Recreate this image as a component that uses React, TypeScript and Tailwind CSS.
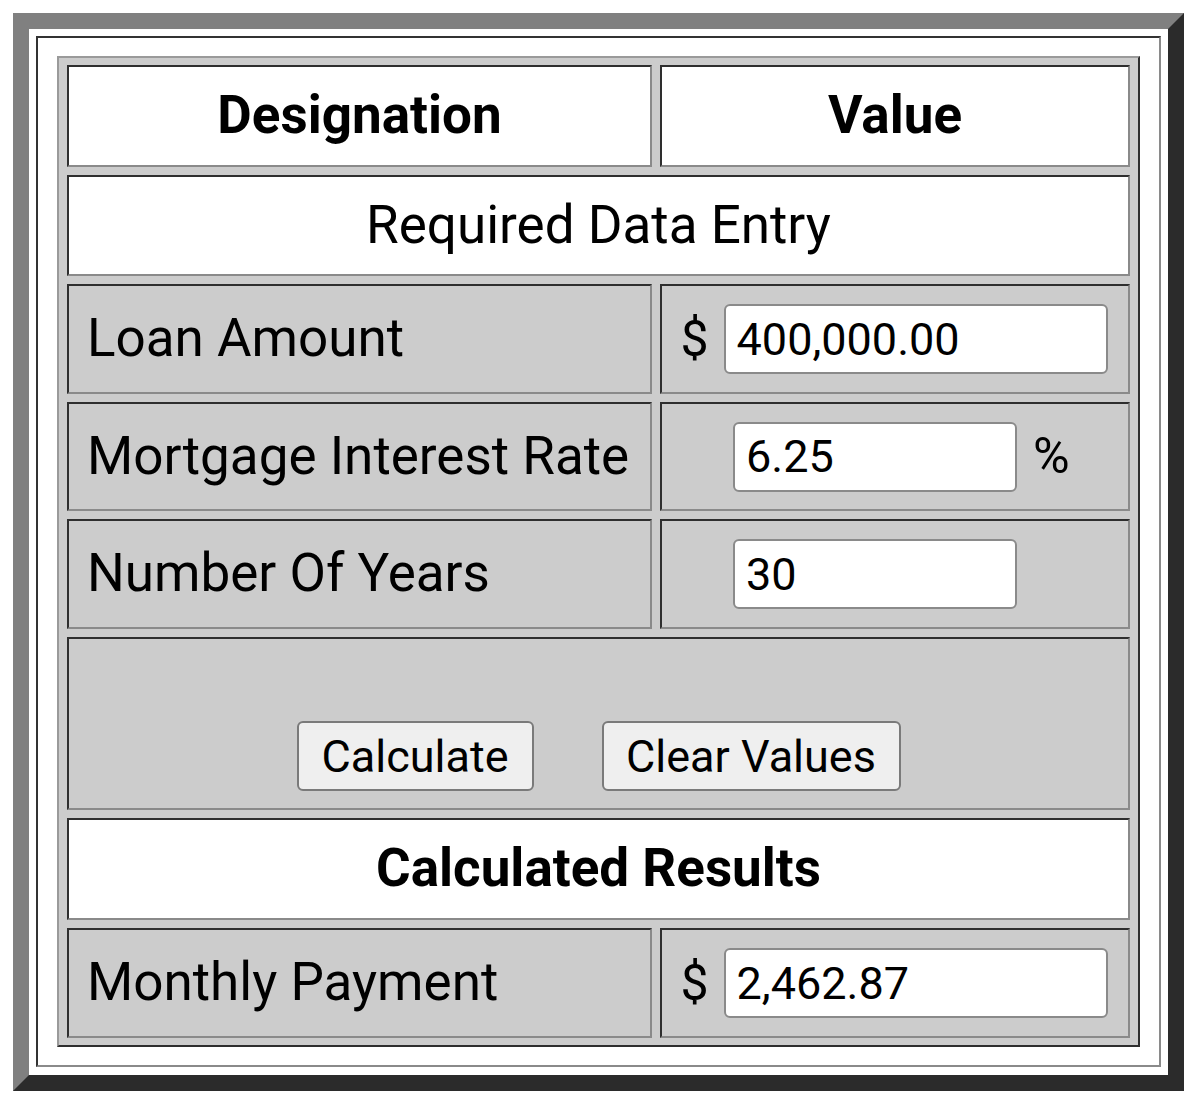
import React from 'react';

const cellBase =
    'border-2 border-t-[#2e2e2e] border-l-[#2e2e2e] border-b-[#8a8a8a] border-r-[#8a8a8a]';

function Label({ children, tall }: { children: React.ReactNode; tall?: boolean }) {
    return (
        <div
            className={`${cellBase} flex ${tall ? 'h-[110px]' : 'h-[109px]'} items-center bg-[#cccccc] pl-[18px] text-[53px]`}
        >
            {children}
        </div>
    );
}

function Field({ value, width }: { value: string; width: string }) {
    return (
        <input
            readOnly
            value={value}
            className={`${width} h-[70px] rounded-[6px] border-2 border-[#8a8a8a] bg-white pl-[11px] text-[45px] text-black outline-none`}
            style={{ fontFamily: 'Roboto, sans-serif' }}
        />
    );
}

export default function App() {
    return (
        <div className="min-h-[1107px] bg-white pl-[13px] pt-[13px]" style={{ fontFamily: 'Roboto, "Noto Sans", sans-serif' }}>
            <div className="w-[1171px] border-[16px] border-t-[#808080] border-l-[#808080] border-b-[#2b2b2b] border-r-[#2b2b2b] bg-white p-[7px] pb-[8px]">
                <div className="border-2 border-t-[#333333] border-l-[#333333] border-b-[#8a8a8a] border-r-[#8a8a8a] px-[19px] py-[18px]">
                    <div className="border-2 border-t-[#9a9a9a] border-l-[#9a9a9a] border-b-[#2e2e2e] border-r-[#2e2e2e] bg-[#cccccc] p-[7px] pl-[8px]">
                        <div className="grid grid-cols-[585px_470px] gap-[8px] text-black">
                            {/* header */}
                            <div className={`${cellBase} flex h-[102px] items-center justify-center bg-white text-[53px] font-bold`}>
                                Designation
                            </div>
                            <div className={`${cellBase} flex h-[102px] items-center justify-center bg-white text-[53px] font-bold`}>
                                Value
                            </div>

                            <div className={`${cellBase} col-span-2 flex h-[101px] items-center justify-center bg-white text-[53px]`}>
                                Required Data Entry
                            </div>

                            {/* loan */}
                            <Label tall>Loan Amount</Label>
                            <div className={`${cellBase} flex h-[110px] items-center justify-center gap-[15px] bg-[#cccccc] pr-[2px]`}>
                                <span className="text-[50px]">$</span>
                                <Field value="400,000.00" width="w-[384px]" />
                            </div>

                            {/* rate */}
                            <Label>Mortgage Interest Rate</Label>
                            <div className={`${cellBase} flex h-[109px] items-center gap-[16px] bg-[#cccccc] pl-[71px]`}>
                                <Field value="6.25" width="w-[284px]" />
                                <span className="text-[50px]">%</span>
                            </div>

                            {/* years */}
                            <Label tall>Number Of Years</Label>
                            <div className={`${cellBase} flex h-[110px] items-center bg-[#cccccc] pl-[71px]`}>
                                <Field value="30" width="w-[284px]" />
                            </div>

                            {/* buttons */}
                            <div className={`${cellBase} col-span-2 flex h-[173px] items-end justify-center gap-[68px] bg-[#cccccc] pb-[17px]`}>
                                <button
                                    type="button"
                                    className="h-[70px] w-[237px] rounded-[6px] border-2 border-[#7a7a7a] bg-[#efefef] text-[45px] text-black"
                                >
                                    Calculate
                                </button>
                                <button
                                    type="button"
                                    className="h-[70px] w-[299px] rounded-[6px] border-2 border-[#7a7a7a] bg-[#efefef] text-[45px] text-black"
                                >
                                    Clear Values
                                </button>
                            </div>

                            <div className={`${cellBase} col-span-2 flex h-[102px] items-center justify-center bg-white text-[53px] font-bold`}>
                                Calculated Results
                            </div>

                            {/* result */}
                            <Label tall>Monthly Payment</Label>
                            <div className={`${cellBase} flex h-[110px] items-center justify-center gap-[15px] bg-[#cccccc] pr-[2px]`}>
                                <span className="text-[50px]">$</span>
                                <Field value="2,462.87" width="w-[384px]" />
                            </div>
                        </div>
                    </div>
                </div>
            </div>
        </div>
    );
}
